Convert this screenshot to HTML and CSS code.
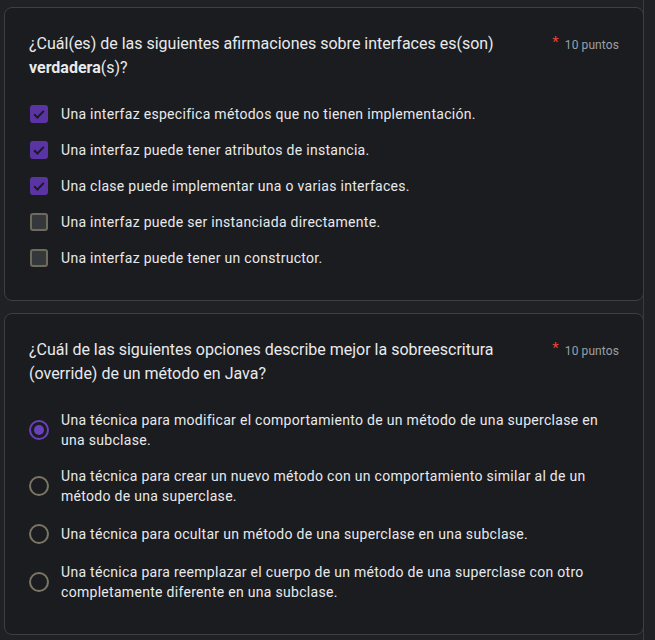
FILE: index.html
```html
<!DOCTYPE html>
<html lang="es">
<head>
<meta charset="utf-8">
<title>Formulario</title>
<link rel="stylesheet" href="styles.css">
</head>
<body>
<div class="page">
  <section class="card">
    <div class="q-head">
      <div class="q-title">¿Cuál(es) de las siguientes afirmaciones sobre interfaces es(son) <b>verdadera</b>(s)?</div>
      <div class="q-points"><span class="req">*</span>10 puntos</div>
    </div>
    <ul class="opts checks">
      <li class="opt"><span class="box on"><svg viewBox="0 0 18 18" width="18" height="18"><path d="M4.2 9.3l3.2 3.2 6.4-6.6" fill="none" stroke="#1b1c1f" stroke-width="2"/></svg></span><span class="lbl">Una interfaz especifica métodos que no tienen implementación.</span></li>
      <li class="opt"><span class="box on"><svg viewBox="0 0 18 18" width="18" height="18"><path d="M4.2 9.3l3.2 3.2 6.4-6.6" fill="none" stroke="#1b1c1f" stroke-width="2"/></svg></span><span class="lbl">Una interfaz puede tener atributos de instancia.</span></li>
      <li class="opt"><span class="box on"><svg viewBox="0 0 18 18" width="18" height="18"><path d="M4.2 9.3l3.2 3.2 6.4-6.6" fill="none" stroke="#1b1c1f" stroke-width="2"/></svg></span><span class="lbl">Una clase puede implementar una o varias interfaces.</span></li>
      <li class="opt"><span class="box"></span><span class="lbl">Una interfaz puede ser instanciada directamente.</span></li>
      <li class="opt"><span class="box"></span><span class="lbl">Una interfaz puede tener un constructor.</span></li>
    </ul>
  </section>
  <section class="card">
    <div class="q-head">
      <div class="q-title">¿Cuál de las siguientes opciones describe mejor la sobreescritura (override) de un método en Java?</div>
      <div class="q-points"><span class="req">*</span>10 puntos</div>
    </div>
    <ul class="opts radios">
      <li class="ropt"><span class="radio on"></span><span class="lbl">Una técnica para modificar el comportamiento de un método de una superclase en una subclase.</span></li>
      <li class="ropt"><span class="radio"></span><span class="lbl">Una técnica para crear un nuevo método con un comportamiento similar al de un método de una superclase.</span></li>
      <li class="ropt"><span class="radio"></span><span class="lbl">Una técnica para ocultar un método de una superclase en una subclase.</span></li>
      <li class="ropt"><span class="radio"></span><span class="lbl">Una técnica para reemplazar el cuerpo de un método de una superclase con otro completamente diferente en una subclase.</span></li>
    </ul>
  </section>
</div>
</body>
</html>
```
FILE: styles.css
```css
html, body {
  margin: 0;
  padding: 0;
  background: #202124;
}
body {
  font-family: Roboto, "Liberation Sans", Arial, sans-serif;
  color: #e8eaed;
}
.page {
  width: 644px;
  min-height: 100vh;
  box-sizing: border-box;
  padding: 7px 0 0 4px;
  border-right: 1px solid #3a3b3e;
  display: flex;
  flex-direction: column;
  gap: 12px;
}
.card {
  background: #1b1c1f;
  border: 1px solid #3c4043;
  border-radius: 8px;
  padding: 24px;
  margin-right: -1px;
}
.q-head {
  display: flex;
  align-items: flex-start;
  gap: 24px;
}
.q-title {
  flex: 1;
  font-size: 16px;
  line-height: 24px;
  letter-spacing: 0;
}
.q-title b {
  font-weight: 700;
}
.q-points {
  font-size: 12px;
  line-height: 24px;
  color: #9aa0a6;
  white-space: nowrap;
  letter-spacing: 0.1px;
}
.req {
  color: #ea4335;
  font-size: 15px;
  position: relative;
  top: -2px;
  margin-right: 6px;
}
.opts {
  list-style: none;
  margin: 16px 0 0;
  padding: 0;
}
.opt {
  display: flex;
  align-items: center;
  height: 36px;
  font-size: 14px;
}
.box {
  width: 18px;
  height: 18px;
  box-sizing: border-box;
  margin-left: 1px;
  margin-right: 13px;
  border: 2px solid #6f6a5e;
  border-radius: 3px;
  background: #34383b;
  flex-shrink: 0;
  display: flex;
}
.box.on {
  border: none;
  background: #5b34a4;
}
.lbl {
  font-size: 14px;
  line-height: 20px;
  letter-spacing: 0.3px;
}
.ropt {
  display: flex;
  align-items: center;
  min-height: 40px;
  padding: 8px 0;
  box-sizing: border-box;
}
.radio {
  width: 20px;
  height: 20px;
  box-sizing: border-box;
  border: 2px solid #7a7565;
  border-radius: 50%;
  margin-right: 12px;
  flex-shrink: 0;
  display: flex;
  align-items: center;
  justify-content: center;
}
.radio.on {
  border-color: #6a40bd;
}
.radio.on::after {
  content: "";
  width: 10px;
  height: 10px;
  border-radius: 50%;
  background: #6a40bd;
}
```
